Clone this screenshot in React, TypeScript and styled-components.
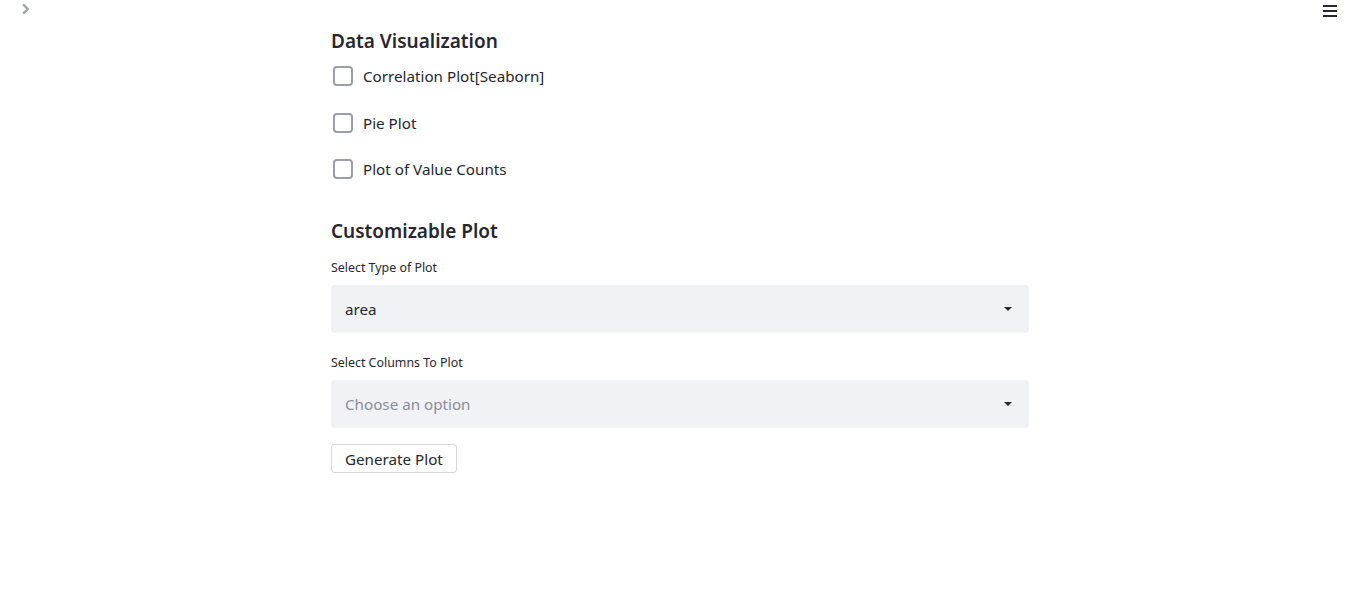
import React from "react";
import styled, { createGlobalStyle } from "styled-components";

const Global = createGlobalStyle`
  html, body { margin: 0; padding: 0; background: #fff; }
  body { font-family: "Noto Sans", "Open Sans", sans-serif; color: #262730; }
  * { box-sizing: border-box; }
`;

const Page = styled.div`
  position: relative;
  width: 1348px;
  height: 605px;
  overflow: hidden;
  background: #fff;
`;

const SidebarToggle = styled.div`
  position: absolute;
  left: 20px;
  top: -1px;
  width: 14px;
  height: 14px;
  color: #a3a6af;
`;

const MenuButton = styled.div`
  position: absolute;
  right: 10px;
  top: 1px;
  width: 16px;
  height: 16px;
  color: #262730;
`;

const Main = styled.main`
  width: 698px;
  margin-left: 331px;
  padding-top: 28px;
  display: flex;
  flex-direction: column;
`;

const Heading = styled.h3`
  margin: 0;
  font-size: 19px;
  font-weight: 600;
  line-height: 26px;
  color: #262730;
`;

const CheckList = styled.div`
  display: flex;
  flex-direction: column;
  margin-top: 10px;
  gap: 22.5px;
`;

const CheckRow = styled.label`
  display: flex;
  align-items: center;
  gap: 10px;
  height: 24px;
  padding-left: 2px;
  font-size: 15.2px;
  color: #262730;
`;

const Box = styled.span`
  width: 20px;
  height: 20px;
  border: 2px solid #9b9da7;
  border-radius: 4px;
  background: #fff;
`;

const Section = styled.div<{ $top: number }>`
  margin-top: ${(p) => p.$top}px;
`;

const FieldLabel = styled.div`
  font-size: 12.4px;
  line-height: 16px;
  color: #262730;
  margin-bottom: 9px;
`;

const Select = styled.div<{ $placeholder?: boolean }>`
  height: 48px;
  border-radius: 4px;
  background: #f0f2f6;
  display: flex;
  align-items: center;
  justify-content: space-between;
  padding: 0 14px 0 14px;
  font-size: 15.2px;
  color: ${(p) => (p.$placeholder ? "#8a8d99" : "#262730")};
`;

const Caret = styled.span`
  width: 0;
  height: 0;
  border-left: 4px solid transparent;
  border-right: 4px solid transparent;
  border-top: 4px solid #262730;
  margin-right: 3px;
`;

const Button = styled.button`
  align-self: flex-start;
  margin-top: 16px;
  height: 29px;
  padding: 0 13px;
  background: #fff;
  border: 1px solid rgba(49, 51, 63, 0.2);
  border-radius: 4px;
  font-family: inherit;
  font-size: 15.2px;
  color: #262730;
`;

export default function App() {
  return (
    <Page>
      <Global />
      <SidebarToggle>
        <svg viewBox="0 0 14 14" width="14" height="14">
          <path d="M4 1.5 L9.5 7 L4 12.5 L2.3 10.8 L6.1 7 L2.3 3.2 Z" fill="currentColor" />
        </svg>
      </SidebarToggle>
      <MenuButton>
        <svg viewBox="0 0 16 16" width="16" height="16">
          <rect x="1" y="3" width="14" height="2" fill="currentColor" />
          <rect x="1" y="8" width="14" height="2" fill="currentColor" />
          <rect x="1" y="13" width="14" height="2" fill="currentColor" />
        </svg>
      </MenuButton>
      <Main>
        <Heading>Data Visualization</Heading>
        <CheckList>
          <CheckRow><Box />Correlation Plot[Seaborn]</CheckRow>
          <CheckRow><Box />Pie Plot</CheckRow>
          <CheckRow><Box />Plot of Value Counts</CheckRow>
        </CheckList>
        <Section $top={37}>
          <Heading>Customizable Plot</Heading>
        </Section>
        <Section $top={16}>
          <FieldLabel>Select Type of Plot</FieldLabel>
          <Select>area<Caret /></Select>
        </Section>
        <Section $top={22}>
          <FieldLabel>Select Columns To Plot</FieldLabel>
          <Select $placeholder>Choose an option<Caret /></Select>
        </Section>
        <Button>Generate Plot</Button>
      </Main>
    </Page>
  );
}
